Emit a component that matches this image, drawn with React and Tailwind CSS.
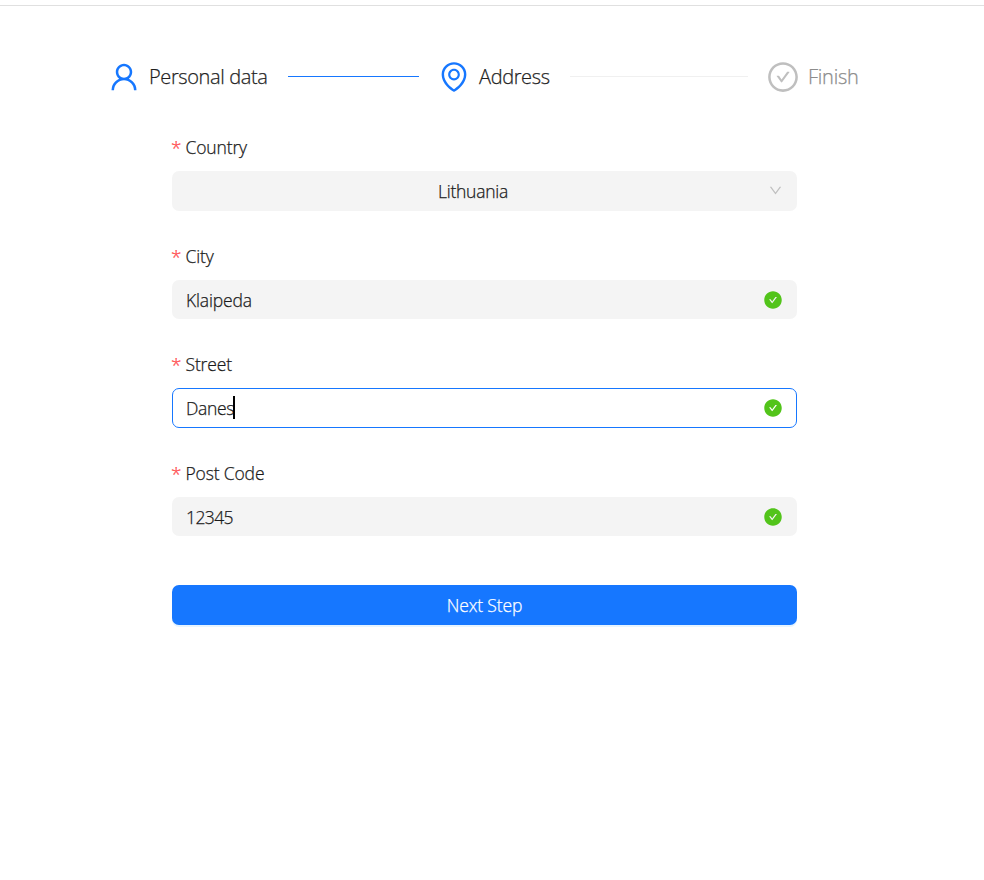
import React from "react";
import {
  AiOutlineUser,
  AiOutlineEnvironment,
  AiOutlineCheckCircle,
  AiFillCheckCircle,
  AiOutlineDown,
} from "react-icons/ai";

function Label({ children }) {
  return (
    <div className="flex h-6 items-center pb-[2px] leading-6">
      <span className="-ml-px w-[14.5px] shrink-0 pt-[2px] text-[19px] text-[#ff4d4f]">*</span>
      <span>{children}</span>
    </div>
  );
}

function Valid() {
  return <AiFillCheckCircle className="size-5 text-[#52c41a]" />;
}

export default function App() {
  return (
    <div className="h-[880px] w-[984px] overflow-hidden bg-white pt-[5px] font-['Open_Sans','Noto_Sans',sans-serif] font-light [-webkit-text-stroke:0.25px_currentColor]">
      <div className="h-px bg-[#e0e0e0]" />
      <div className="mt-[54px] flex h-[34px] items-center pl-[107px] text-[20px] leading-[34px] tracking-[-0.38px] text-[#1f1f1f]">
        <AiOutlineUser className="size-[34px] shrink-0 text-[#1677ff]" />
        <span className="ml-2 w-[119px] whitespace-nowrap">Personal data</span>
        <span className="-mt-[2px] ml-5 h-px w-[131px] bg-[#1677ff]" />
        <AiOutlineEnvironment className="ml-[18px] size-[34px] shrink-0 text-[#1677ff]" />
        <span className="ml-2 w-[71px] whitespace-nowrap">Address</span>
        <span className="-mt-[2px] ml-5 h-px w-[178px] bg-[#f0f0f0]" />
        <AiOutlineCheckCircle className="ml-[18px] size-[34px] shrink-0 text-[#bfbfbf]" />
        <span className="ml-2 tracking-[-0.25px] text-[#8c8c8c]">Finish</span>
      </div>

      <form className="ml-[172px] mt-[42px] w-[625px] text-[17.5px] tracking-[-0.15px] text-[#1a1a1a]">
        <Label>Country</Label>
        <div className="mt-[11px] flex h-10 items-center rounded-[7px] bg-[#f4f4f4] pr-[14px]">
          <span className="flex-1 pl-[6px] text-center tracking-[-0.25px]">Lithuania</span>
          <AiOutlineDown className="-mt-[2px] size-[15px] text-[#bfbfbf]" />
        </div>

        <div className="mt-[34px]" />
        <Label>City</Label>
        <div className="mt-[11px] flex h-[39px] items-center justify-between rounded-[7px] bg-[#f4f4f4] px-[14px]">
          <span className="pt-[2px]">Klaipeda</span>
          <Valid />
        </div>

        <div className="mt-[34px]" />
        <Label>Street</Label>
        <div className="mt-[11px] flex h-10 items-center justify-between rounded-[7px] border border-[#1677ff] bg-white px-[13px]">
          <span className="flex items-center tracking-[-0.3px]">
            Danes<span className="-ml-px -mt-[2px] h-[23px] w-[2px] bg-black" />
          </span>
          <Valid />
        </div>

        <div className="mt-[34px]" />
        <Label>Post Code</Label>
        <div className="mt-[11px] flex h-[39px] items-center justify-between rounded-[7px] bg-[#f4f4f4] px-[14px]">
          <span className="pt-[2px] tracking-[-0.6px]">12345</span>
          <Valid />
        </div>

        <button
          type="button"
          className="mt-[49px] flex h-10 w-full items-center justify-center rounded-[7px] bg-[#1677ff] text-white shadow-[0_2px_0_rgba(5,145,255,0.1)]"
        >
          Next Step
        </button>
      </form>
    </div>
  );
}
